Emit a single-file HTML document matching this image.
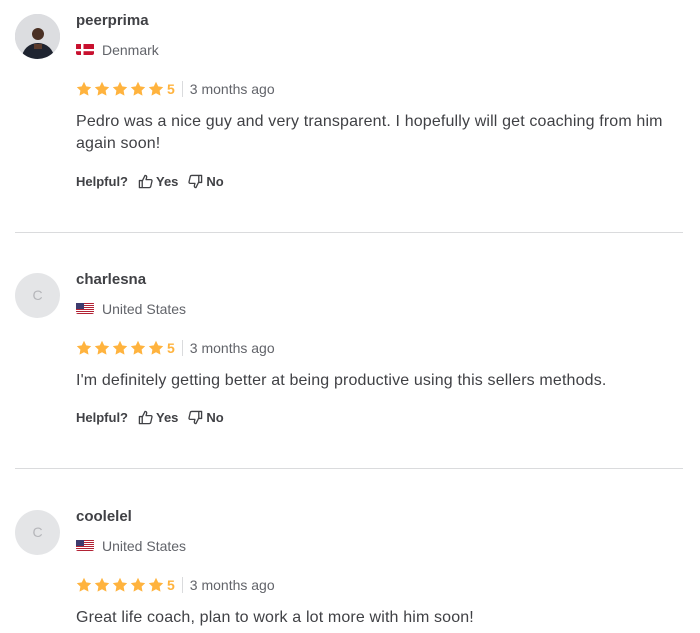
<!DOCTYPE html>
<html><head><style>
body{margin:0;background:#fff;font-family:"Liberation Sans",sans-serif;color:#404145;width:700px;height:633px;overflow:hidden;position:relative}
.r{position:absolute;left:0;width:700px}
.av{position:absolute;left:15px;top:14px;width:45px;height:45px;border-radius:50%;background:#e4e5e7;color:#b5b6ba;font-size:14px;text-align:center;line-height:45px}
.nm{position:absolute;left:76px;top:12px;font-weight:bold;font-size:15px;color:#404145}
.fl{position:absolute;left:76px;top:43px;width:18px;height:12px;border-radius:2px;overflow:hidden}
.ct{position:absolute;left:102px;top:42px;font-size:14px;color:#62646a}
.st{position:absolute;left:76px;top:80px;height:18px;display:flex;align-items:center}
.st svg{margin-right:2px}
.sc{color:#ffb33e;font-weight:bold;font-size:14px;margin-left:1px}
.sep{width:1px;height:16px;background:#dadbdd;margin:0 7px}
.ag{font-size:14px;color:#62646a}
.tx{position:absolute;left:76px;top:111px;font-size:16px;line-height:22px;width:610px;color:#404145;letter-spacing:0.15px}
.hp{position:absolute;left:76px;font-size:13px;font-weight:bold;display:flex;align-items:center;color:#404145}
.hp svg{margin:0 3px 0 10px}
.hr{position:absolute;left:15px;width:668px;height:1px;background:#dadbdd}
</style></head><body>

<svg width="0" height="0" style="position:absolute"><defs><symbol id="s" viewBox="0 0 16 16"><path d="M8 .8l2.2 4.6 5 .7-3.6 3.5.9 5L8 12.2 3.5 14.6l.9-5L.8 6.1l5-.7z" fill="#ffb33e"/></symbol>
<symbol id="up" viewBox="0 0 16 16"><path d="M1.5 7h3v7.5h-3zM4.5 7.5L7.5 1.5c1.3 0 2 .8 1.7 2.2L8.6 6h5c.9 0 1.5.8 1.3 1.6l-1.3 5.6c-.2.8-.9 1.3-1.7 1.3H4.5" fill="none" stroke="#404145" stroke-width="1.4" stroke-linejoin="round"/></symbol>
<symbol id="dn" viewBox="0 0 16 16"><g transform="rotate(180 8 8)"><path d="M1.5 7h3v7.5h-3zM4.5 7.5L7.5 1.5c1.3 0 2 .8 1.7 2.2L8.6 6h5c.9 0 1.5.8 1.3 1.6l-1.3 5.6c-.2.8-.9 1.3-1.7 1.3H4.5" fill="none" stroke="#404145" stroke-width="1.4" stroke-linejoin="round"/></g></symbol>
<symbol id="us" viewBox="0 0 18 12"><rect width="18" height="12" fill="#fff"/><g fill="#b22234"><rect y="0" width="18" height="1"/><rect y="2" width="18" height="1"/><rect y="4" width="18" height="1"/><rect y="6" width="18" height="1"/><rect y="8" width="18" height="1"/><rect y="10" width="18" height="1"/></g><rect width="8" height="6" fill="#3c3b6e"/></symbol>
</defs></svg>

<div class="r" style="top:0">
 <div class="av" style="background:#c9ccd2;overflow:hidden"><svg width="45" height="45"><rect width="45" height="45" fill="#dcdde0"/><ellipse cx="23" cy="44" rx="16" ry="15" fill="#1f2430"/><circle cx="23" cy="20" r="6" fill="#4a3024"/><rect x="19" y="30" width="8" height="5" fill="#5b3b2c"/></svg></div>
 <div class="nm">peerprima</div>
 <div class="fl"><svg width="18" height="12"><rect width="18" height="12" fill="#c8102e"/><rect x="5" width="2.5" height="12" fill="#fff"/><rect y="5" width="18" height="2.2" fill="#fff"/></svg></div>
 <div class="ct">Denmark</div>
 <div class="st"><svg width="16" height="16"><use href="#s"/></svg><svg width="16" height="16"><use href="#s"/></svg><svg width="16" height="16"><use href="#s"/></svg><svg width="16" height="16"><use href="#s"/></svg><svg width="16" height="16"><use href="#s"/></svg><span class="sc">5</span><span class="sep"></span><span class="ag">3 months ago</span></div>
 <div class="tx">Pedro was a nice guy and very transparent. I hopefully will get coaching from him again soon!</div>
 <div class="hp" style="top:174px">Helpful?<svg width="15" height="15"><use href="#up"/></svg>Yes<svg width="15" height="15"><use href="#dn"/></svg>No</div>
 <div class="hr" style="top:232px"></div>
</div>

<div class="r" style="top:259px">
 <div class="av">C</div>
 <div class="nm">charlesna</div>
 <div class="fl"><svg width="18" height="12"><use href="#us"/></svg></div>
 <div class="ct">United States</div>
 <div class="st"><svg width="16" height="16"><use href="#s"/></svg><svg width="16" height="16"><use href="#s"/></svg><svg width="16" height="16"><use href="#s"/></svg><svg width="16" height="16"><use href="#s"/></svg><svg width="16" height="16"><use href="#s"/></svg><span class="sc">5</span><span class="sep"></span><span class="ag">3 months ago</span></div>
 <div class="tx">I'm definitely getting better at being productive using this sellers methods.</div>
 <div class="hp" style="top:151px">Helpful?<svg width="15" height="15"><use href="#up"/></svg>Yes<svg width="15" height="15"><use href="#dn"/></svg>No</div>
 <div class="hr" style="top:209px"></div>
</div>

<div class="r" style="top:496px">
 <div class="av">C</div>
 <div class="nm">coolelel</div>
 <div class="fl"><svg width="18" height="12"><use href="#us"/></svg></div>
 <div class="ct">United States</div>
 <div class="st"><svg width="16" height="16"><use href="#s"/></svg><svg width="16" height="16"><use href="#s"/></svg><svg width="16" height="16"><use href="#s"/></svg><svg width="16" height="16"><use href="#s"/></svg><svg width="16" height="16"><use href="#s"/></svg><span class="sc">5</span><span class="sep"></span><span class="ag">3 months ago</span></div>
 <div class="tx">Great life coach, plan to work a lot more with him soon!</div>
</div>
</body></html>
